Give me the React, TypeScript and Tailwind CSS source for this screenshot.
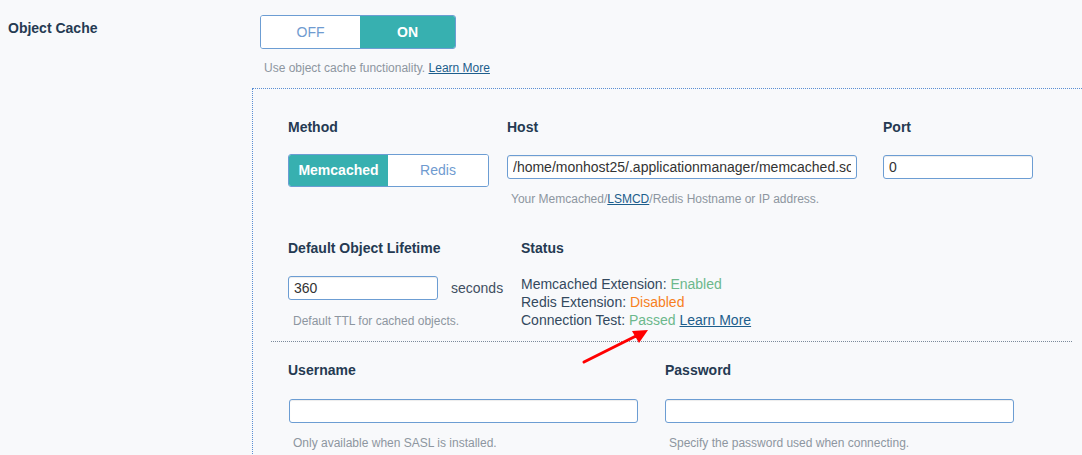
import React from "react";

const label = "text-[14px] font-bold leading-5 text-[#253a52] h-5";
const hint = "text-[12px] leading-4 text-[#8d96a0]";
const input =
  "h-[24px] rounded-[3px] border border-[#6c9dd3] bg-white px-[5px] text-[14px] leading-[22px] text-[#333] shadow-[inset_0_1px_1px_rgba(0,0,0,0.075)] outline-none";

export default function App() {
  return (
    <div className="relative h-[455px] w-[1082px] overflow-hidden bg-[#f8f9fb] font-['Liberation_Sans',Arial,sans-serif]">
      <div className="flex pt-[15px]">
        <div className="w-[252px] pl-2 pt-[3px] text-[14px] font-bold leading-5 text-[#253a52]">
          Object Cache
        </div>
        <div className="flex-1">
          <div className="ml-2 flex h-[34px] w-[196px] overflow-hidden rounded-[3px] border border-[#6c9dd3] text-[14px]">
            <div className="flex w-[99px] items-center justify-center bg-white text-[#6f9bd0]">OFF</div>
            <div className="flex flex-1 items-center justify-center bg-[#37b0b0] font-bold text-white">ON</div>
          </div>
          <div className={`${hint} ml-3 mt-[11px]`}>
            Use object cache functionality.{" "}
            <a className="text-[#1d5e8c] underline">Learn More</a>
          </div>
          <div className="mt-[12px] h-[400px] border-l border-t border-dotted border-[#5b8fd3] pl-[35px] pt-[28px]">
            {/* Row 1 */}
            <div className="flex items-start">
              <div className="w-[219px]">
                <div className={label}>Method</div>
                <div className="mt-[17px] flex h-[33px] w-[201px] overflow-hidden rounded-[3px] border border-[#6c9dd3] text-[14px]">
                  <div className="flex w-[99px] items-center justify-center bg-[#37b0b0] font-bold text-white">Memcached</div>
                  <div className="flex flex-1 items-center justify-center bg-white text-[#6f9bd0]">Redis</div>
                </div>
              </div>
              <div className="w-[376px]">
                <div className={label}>Host</div>
                <input
                  className={`${input} mt-[18px] w-[350px]`}
                  defaultValue="/home/monhost25/.applicationmanager/memcached.sock"
                  readOnly
                />
                <div className={`${hint} ml-1 mt-[12px]`}>
                  Your Memcached/<a className="text-[#1d5e8c] underline">LSMCD</a>/Redis Hostname or IP address.
                </div>
              </div>
              <div>
                <div className={label}>Port</div>
                <input className={`${input} mt-[18px] w-[150px]`} defaultValue="0" readOnly />
              </div>
            </div>

            {/* Row 2 */}
            <div className="mt-[31px] flex items-start">
              <div className="w-[233px]">
                <div className={label}>Default Object Lifetime</div>
                <div className="mt-[18px] flex items-center">
                  <input className={`${input} w-[150px]`} defaultValue="360" readOnly />
                  <span className="ml-[13px] text-[14px] text-[#3f4f61]">seconds</span>
                </div>
                <div className={`${hint} ml-[5px] mt-[13px]`}>Default TTL for cached objects.</div>
              </div>
              <div>
                <div className={label}>Status</div>
                <div className="mt-[17px] text-[14px] leading-[18px] text-[#34495e]">
                  <div>
                    Memcached Extension: <span className="text-[#6cb88c]">Enabled</span>
                  </div>
                  <div>
                    Redis Extension: <span className="text-[#f7801e]">Disabled</span>
                  </div>
                  <div>
                    Connection Test: <span className="text-[#6cb88c]">Passed</span>{" "}
                    <a className="text-[#1d5e8c] underline">Learn More</a>
                  </div>
                </div>
              </div>
            </div>

            <div className="ml-[-17px] mt-[12px] w-[801px] border-t border-dotted border-[#7b8a9b]" />

            {/* Row 3 */}
            <div className="mt-[18px] flex items-start">
              <div className="w-[377px]">
                <div className={label}>Username</div>
                <input className={`${input} ml-px mt-[19px] w-[349px]`} readOnly />
                <div className={`${hint} ml-[5px] mt-[12px]`}>Only available when SASL is installed.</div>
              </div>
              <div>
                <div className={label}>Password</div>
                <input className={`${input} mt-[19px] w-[349px]`} type="password" readOnly />
                <div className={`${hint} ml-1 mt-[12px]`}>Specify the password used when connecting.</div>
              </div>
            </div>
          </div>
        </div>
      </div>

      <svg className="pointer-events-none absolute left-0 top-0" width="1082" height="455">
        <line x1="584" y1="362" x2="636" y2="336" stroke="#ff0000" strokeWidth="3" strokeLinecap="round" />
        <polygon points="648,330 632,331 639,343" fill="#ff0000" />
      </svg>
    </div>
  );
}
